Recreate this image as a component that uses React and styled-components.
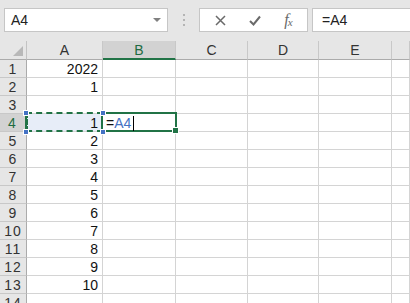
import React from "react";
import styled, { createGlobalStyle } from "styled-components";

const GlobalStyle = createGlobalStyle`
  html, body {
    margin: 0;
    padding: 0;
    width: 410px;
    height: 303px;
    overflow: hidden;
    background: #ffffff;
    font-family: "Liberation Sans", Arial, sans-serif;
  }
`;

const Sheet = styled.div`
  width: 410px;
  height: 303px;
  overflow: hidden;
  display: flex;
  flex-direction: column;
`;

const Toolbar = styled.div`
  display: flex;
  align-items: stretch;
  height: 41px;
  box-sizing: border-box;
  padding: 8px 0 9px 4px;
  background: #e6e6e6;
  flex-shrink: 0;
`;

const NameBox = styled.div`
  width: 164px;
  box-sizing: border-box;
  border: 1px solid #c6c6c6;
  background: #fff;
  display: flex;
  align-items: center;
  padding: 0 6px 0 6px;
  font-size: 14px;
  color: #222;
`;

const NameText = styled.span`
  flex: 1;
`;

const DropArrow = styled.span`
  width: 0;
  height: 0;
  border-left: 4px solid transparent;
  border-right: 4px solid transparent;
  border-top: 4px solid #808080;
`;

const Grip = styled.div`
  width: 31px;
  display: flex;
  flex-direction: column;
  align-items: center;
  justify-content: center;
  gap: 3px;
`;

const GripDot = styled.span`
  width: 2px;
  height: 2px;
  background: #b4b4b4;
`;

const ButtonBox = styled.div`
  width: 109px;
  box-sizing: border-box;
  border: 1px solid #c6c6c6;
  background: #fff;
  display: flex;
  align-items: center;
  justify-content: space-around;
  padding: 0 4px;
`;

const FxLabel = styled.span`
  font-family: "Liberation Serif", "Times New Roman", serif;
  font-style: italic;
  font-size: 16px;
  color: #6a6a6a;
  letter-spacing: -1px;
  sub {
    font-size: 11px;
    vertical-align: -1px;
  }
`;

const FormulaBox = styled.div`
  flex: 1;
  margin-left: 4px;
  box-sizing: border-box;
  border: 1px solid #c6c6c6;
  border-right: none;
  background: #fff;
  display: flex;
  align-items: center;
  padding-left: 9px;
  font-size: 14px;
  color: #222;
`;

const Grid = styled.div`
  display: grid;
  grid-template-columns: 27px 76px 73px 72px 71px 73px 1fr;
  grid-auto-rows: 18px;
  grid-template-rows: 19px;
  font-size: 14px;
`;

const Corner = styled.div`
  position: relative;
  background: #e6e6e6;
  border-right: 1px solid #c3c3c3;
  border-bottom: 1px solid #ababab;
`;

const CornerTriangle = styled.span`
  position: absolute;
  right: 3px;
  bottom: 3px;
  width: 0;
  height: 0;
  border-left: 10px solid transparent;
  border-bottom: 10px solid #b8b8b8;
`;

const ColHeader = styled.div`
  background: ${(p) => (p.$active ? "#d2d2d2" : "#e6e6e6")};
  color: ${(p) => (p.$active ? "#1e6b41" : "#333")};
  border-right: 1px solid #c8c8c8;
  border-bottom: ${(p) => (p.$active ? "2px solid #217346" : "1px solid #ababab")};
  box-sizing: border-box;
  display: flex;
  align-items: center;
  justify-content: center;
  padding-top: ${(p) => (p.$active ? "1px" : "0")};
`;

const RowHeader = styled.div`
  background: ${(p) => (p.$active ? "#d2d2d2" : "#e6e6e6")};
  color: ${(p) => (p.$active ? "#1e6b41" : "#333")};
  border-right: ${(p) => (p.$active ? "2px solid #217346" : "1px solid #ababab")};
  border-bottom: 1px solid #c8c8c8;
  box-sizing: border-box;
  display: flex;
  align-items: center;
  justify-content: center;
  letter-spacing: 1px;
`;

const Cell = styled.div`
  position: relative;
  box-sizing: border-box;
  border-right: 1px solid #d4d4d4;
  border-bottom: 1px solid #d4d4d4;
  background: ${(p) => (p.$marked ? "#e7edf8" : "#fff")};
  display: flex;
  align-items: center;
  justify-content: flex-end;
  padding: 1px 4px 0 2px;
  color: #111;
  white-space: nowrap;
`;

const Marquee = styled.span`
  position: absolute;
  top: -2px;
  left: -1px;
  right: -1px;
  bottom: -1px;
  border: 2px dashed #217346;
  pointer-events: none;
`;

const Handle = styled.span`
  position: absolute;
  width: 4px;
  height: 4px;
  background: #4472c4;
  border: 1px solid #fff;
  ${(p) => (p.$top ? "top: -4px;" : "bottom: -4px;")}
  ${(p) => (p.$left ? "left: -4px;" : "right: -4px;")}
  z-index: 3;
`;

const ActiveFrame = styled.span`
  position: absolute;
  top: -2px;
  left: -2px;
  right: -2px;
  bottom: -1px;
  border: 2px solid #217346;
  pointer-events: none;
  z-index: 2;
`;

const FillHandle = styled.span`
  position: absolute;
  right: -4px;
  bottom: -4px;
  width: 5px;
  height: 5px;
  background: #217346;
  border: 1px solid #fff;
`;

const EditText = styled.span`
  position: relative;
  margin-right: auto;
  margin-left: 1px;
  display: flex;
  align-items: center;
  z-index: 3;
`;

const Ref = styled.span`
  color: #4472c4;
`;

const Caret = styled.span`
  width: 1px;
  height: 15px;
  background: #000;
  margin-left: 2px;
`;

const columns = ["A", "B", "C", "D", "E", ""];
const values = { 1: "2022", 2: "1", 4: "1", 5: "2", 6: "3", 7: "4", 8: "5", 9: "6", 10: "7", 11: "8", 12: "9", 13: "10" };

function CloseIcon() {
  return (
    <svg width="11" height="11" viewBox="0 0 11 11">
      <path d="M1 1L10 10M10 1L1 10" stroke="#6a6a6a" strokeWidth="1.5" fill="none" />
    </svg>
  );
}

function CheckIcon() {
  return (
    <svg width="12" height="11" viewBox="0 0 12 11">
      <path d="M1 6L4.5 9.5L11 1.5" stroke="#6a6a6a" strokeWidth="2" fill="none" />
    </svg>
  );
}

export default function App() {
  const rows = Array.from({ length: 14 }, (_, i) => i + 1);
  return (
    <Sheet>
      <GlobalStyle />
      <Toolbar>
        <NameBox>
          <NameText>A4</NameText>
          <DropArrow />
        </NameBox>
        <Grip>
          <GripDot />
          <GripDot />
          <GripDot />
        </Grip>
        <ButtonBox>
          <CloseIcon />
          <CheckIcon />
          <FxLabel>
            f<sub>x</sub>
          </FxLabel>
        </ButtonBox>
        <FormulaBox>=A4</FormulaBox>
      </Toolbar>
      <Grid>
        <Corner>
          <CornerTriangle />
        </Corner>
        {columns.map((c, i) => (
          <ColHeader key={i} $active={c === "B"}>
            {c}
          </ColHeader>
        ))}
        {rows.map((r) => (
          <React.Fragment key={r}>
            <RowHeader $active={r === 4}>{r}</RowHeader>
            {columns.map((c, i) => {
              if (r === 4 && c === "A") {
                return (
                  <Cell key={i} $marked>
                    {values[r]}
                    <Marquee />
                    <Handle $top $left />
                    <Handle $top />
                    <Handle $left />
                    <Handle />
                  </Cell>
                );
              }
              if (r === 4 && c === "B") {
                return (
                  <Cell key={i}>
                    <EditText>
                      =<Ref>A4</Ref>
                      <Caret />
                    </EditText>
                    <ActiveFrame>
                      <FillHandle />
                    </ActiveFrame>
                  </Cell>
                );
              }
              return <Cell key={i}>{c === "A" ? values[r] : ""}</Cell>;
            })}
          </React.Fragment>
        ))}
      </Grid>
    </Sheet>
  );
}
